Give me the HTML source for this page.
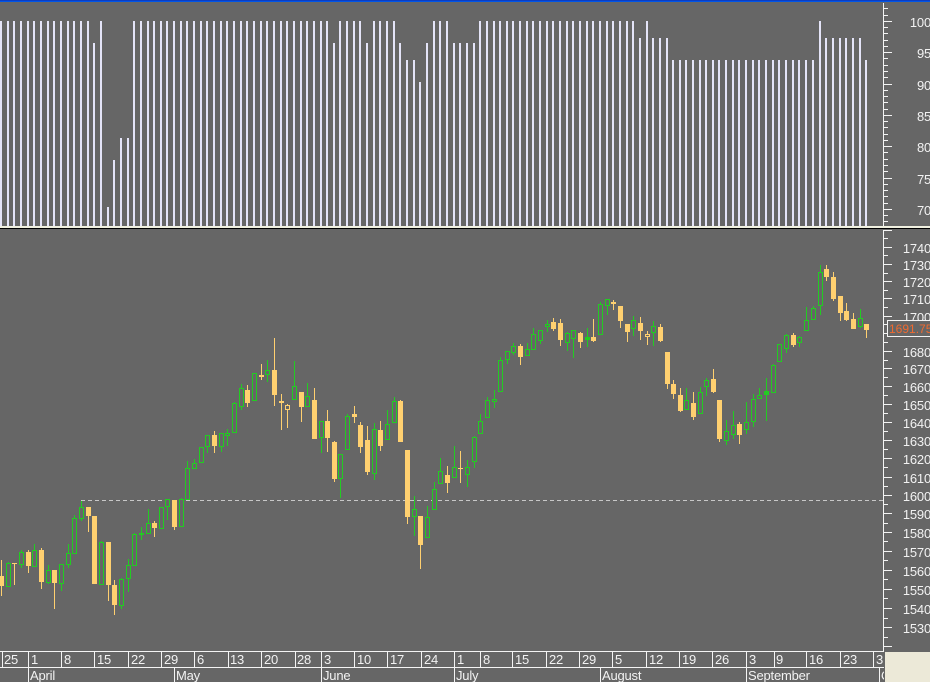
<!DOCTYPE html>
<html><head><meta charset="utf-8"><title>Chart</title>
<style>
html,body{margin:0;padding:0;background:#666;width:930px;height:682px;overflow:hidden}
svg{display:block}
text{font-family:"Liberation Sans",Arial,sans-serif;font-size:13px;letter-spacing:-.2px;fill:#f2f2f2}
</style></head><body>
<svg width="930" height="682" viewBox="0 0 930 682" xmlns="http://www.w3.org/2000/svg" shape-rendering="crispEdges">
<rect width="930" height="682" fill="#666666"/>
<rect width="930" height="1" fill="#0a3cc4"/><rect y="1" width="930" height="1" fill="#0055e5"/>
<!-- upper histogram -->
<path transform="translate(1 0)" fill="none" stroke="#e4e4f8" stroke-width="2" d="M0 21V226M7 21V226M13 21V226M20 21V226M27 21V226M33 21V226M40 21V226M47 21V226M53 21V226M60 21V226M67 21V226M73 21V226M80 21V226M87 21V226M100 21V226M133 21V226M140 21V226M147 21V226M153 21V226M160 21V226M166 21V226M173 21V226M180 21V226M186 21V226M193 21V226M200 21V226M206 21V226M213 21V226M220 21V226M226 21V226M233 21V226M240 21V226M246 21V226M253 21V226M260 21V226M266 21V226M273 21V226M280 21V226M286 21V226M293 21V226M300 21V226M306 21V226M313 21V226M320 21V226M326 21V226M339 21V226M346 21V226M353 21V226M359 21V226M373 21V226M379 21V226M386 21V226M393 21V226M433 21V226M439 21V226M446 21V226M479 21V226M486 21V226M493 21V226M499 21V226M506 21V226M512 21V226M519 21V226M526 21V226M532 21V226M539 21V226M546 21V226M552 21V226M559 21V226M566 21V226M572 21V226M579 21V226M586 21V226M592 21V226M599 21V226M606 21V226M612 21V226M619 21V226M626 21V226M632 21V226M646 21V226M819 21V226M93 43V226M333 43V226M366 43V226M399 43V226M426 43V226M453 43V226M459 43V226M466 43V226M473 43V226M639 38V226M652 38V226M659 38V226M666 38V226M825 38V226M832 38V226M839 38V226M845 38V226M852 38V226M859 38V226M406 60V226M413 60V226M672 60V226M679 60V226M685 60V226M692 60V226M699 60V226M705 60V226M712 60V226M718 60V226M725 60V226M732 60V226M738 60V226M745 60V226M752 60V226M758 60V226M765 60V226M772 60V226M778 60V226M785 60V226M792 60V226M798 60V226M805 60V226M812 60V226M865 60V226M419 82V226M120 138V226M127 138V226M113 160V226M107 207V226"/>
<rect y="226" width="930" height="2" fill="#f0f0e0"/><rect y="228" width="930" height="1" fill="#000"/>
<!-- dashed level -->
<path d="M81 500.5H883" stroke="#c8c8c8" stroke-width="1" stroke-dasharray="4 3" fill="none"/>
<!-- orange wicks -->
<path transform="translate(1.5 0)" fill="none" stroke="#ffd070" stroke-width="1" d="M0 560V596M13 563V585M27 550V573M40 548V589M53 570V609M87 507V532M107 542V601M113 580V615M153 521V537M173 500V530M213 431V453M246 385V407M260 364V380M273 338V406M280 394V430M286 404V428M300 392V422M313 388V439M326 410V452M333 441V482M353 406V423M359 422V453M366 426V475M379 421V451M399 400V442M406 450V524M419 516V569M446 466V493M459 451V483M519 344V365M552 318V331M559 319V346M579 332V348M592 319V342M612 300V310M619 306V328M626 324V342M639 317V340M646 331V345M659 324V342M666 352V389M672 380V399M679 388V412M692 392V420M712 369V393M718 400V442M738 422V444M792 333V347M825 265V281M832 272V301M839 296V321M845 303V321M852 313V329M865 324V338"/>
<!-- orange bodies -->
<path transform="translate(-1 0)" fill="#ffd070" d="M0 576h5V586h-5zM13 563h5V564h-5zM27 552h5V566h-5zM40 550h5V582h-5zM53 570h5V583h-5zM87 507h5V516h-5zM93 516h5V584h-5zM107 542h5V585h-5zM113 585h5V605h-5zM153 523h5V528h-5zM173 500h5V527h-5zM213 435h5V446h-5zM246 390h5V403h-5zM260 375h5V377h-5zM273 370h5V395h-5zM280 401h5V403h-5zM300 392h5V407h-5zM313 400h5V439h-5zM326 421h5V438h-5zM333 442h5V479h-5zM353 414h5V417h-5zM359 425h5V447h-5zM366 440h5V472h-5zM379 430h5V446h-5zM399 401h5V442h-5zM406 450h5V517h-5zM419 516h5V545h-5zM446 475h5V483h-5zM459 468h5V469h-5zM519 346h5V357h-5zM552 322h5V329h-5zM559 323h5V340h-5zM579 333h5V342h-5zM592 337h5V341h-5zM612 302h5V304h-5zM619 306h5V321h-5zM626 324h5V332h-5zM639 323h5V331h-5zM659 327h5V341h-5zM666 352h5V384h-5zM672 384h5V394h-5zM679 395h5V411h-5zM692 403h5V417h-5zM712 379h5V392h-5zM718 400h5V439h-5zM738 424h5V435h-5zM792 335h5V345h-5zM825 269h5V277h-5zM832 277h5V299h-5zM839 296h5V313h-5zM845 311h5V320h-5zM852 319h5V329h-5zM865 324h5V330h-5z"/>
<!-- orange hollow bodies -->
<path transform="translate(-.5 .5)" fill="#666666" stroke="#ffd070" stroke-width="1" d="M286 405h4V409h-4zM646 334h4V336h-4z"/>
<!-- green wicks -->
<path transform="translate(1.5 0)" fill="none" stroke="#22cc22" stroke-width="1" d="M7 562V587M20 550V568M33 544V567M47 565V584M60 564V591M67 544V568M73 515V554M80 501V521M100 541V585M120 578V609M127 559V592M133 533V566M140 527V540M147 509V534M160 507V529M166 499V520M180 498V527M186 461V500M193 459V469M200 447V463M206 435V453M220 433V452M226 429V446M233 402V433M240 384V410M253 373V401M266 360V382M293 361V400M306 383V407M320 421V453M339 454V498M346 414V450M373 423V480M386 410V440M393 397V423M413 496V536M426 506V538M433 482V510M439 458V484M453 446V478M466 460V487M473 436V468M479 414V434M486 397V418M493 390V408M499 357V392M506 351V364M512 343V355M526 343V356M532 328V350M539 330V344M546 320V332M566 332V351M572 330V358M586 328V347M599 302V335M606 299V315M632 316V336M652 321V346M685 388V410M699 387V414M705 378V396M725 420V445M732 411V439M745 402V434M752 394V427M758 388V399M765 378V421M772 364V393M778 344V362M785 334V353M798 336V347M805 307V331M812 306V320M819 265V315M859 309V328"/>
<!-- green hollow bodies -->
<path transform="translate(-.5 .5)" fill="#666666" stroke="#22cc22" stroke-width="1" d="M7 563h4V586h-4zM20 552h4V564h-4zM33 550h4V566h-4zM47 570h4V582h-4zM60 564h4V583h-4zM67 553h4V564h-4zM73 518h4V553h-4zM80 507h4V518h-4zM100 542h4V584h-4zM120 579h4V605h-4zM127 565h4V578h-4zM133 534h4V565h-4zM147 523h4V533h-4zM160 507h4V528h-4zM166 499h4V506h-4zM180 499h4V526h-4zM186 468h4V499h-4zM193 463h4V468h-4zM200 447h4V462h-4zM206 435h4V446h-4zM220 433h4V446h-4zM226 433h4V435h-4zM233 403h4V432h-4zM240 388h4V406h-4zM253 373h4V400h-4zM266 370h4V374h-4zM293 386h4V399h-4zM306 396h4V406h-4zM320 421h4V437h-4zM339 454h4V478h-4zM346 416h4V449h-4zM373 429h4V473h-4zM386 424h4V439h-4zM393 401h4V422h-4zM413 509h4V516h-4zM426 517h4V537h-4zM433 489h4V509h-4zM439 471h4V483h-4zM453 467h4V477h-4zM466 467h4V474h-4zM473 437h4V461h-4zM479 421h4V433h-4zM486 400h4V417h-4zM493 399h4V401h-4zM499 360h4V391h-4zM506 351h4V359h-4zM512 346h4V352h-4zM526 349h4V355h-4zM532 334h4V349h-4zM539 330h4V340h-4zM546 324h4V326h-4zM566 333h4V342h-4zM572 330h4V338h-4zM599 304h4V334h-4zM606 299h4V305h-4zM632 320h4V328h-4zM652 326h4V332h-4zM685 400h4V409h-4zM699 392h4V413h-4zM705 380h4V386h-4zM725 431h4V440h-4zM732 425h4V434h-4zM745 422h4V429h-4zM752 399h4V421h-4zM758 395h4V398h-4zM772 365h4V392h-4zM778 344h4V361h-4zM785 335h4V348h-4zM798 337h4V342h-4zM805 320h4V330h-4zM812 308h4V319h-4zM819 272h4V305h-4zM859 318h4V326h-4z"/>
<!-- green filled bodies -->
<path transform="translate(-1 0)" fill="#22cc22" d="M140 533h5V535h-5zM586 337h5V340h-5zM765 391h5V395h-5z"/>
<!-- axes -->
<g fill="none" stroke="#f4f4f4" stroke-width="1">
<path d="M883.5 3V226M883.5 230V651"/>
<path d="M883 21.5H892M883 52.5H892M883 84.5H892M883 115.5H892M883 146.5H892M883 178.5H892M883 209.5H892M883 8.5H888M883 15.5H888M883 27.5H888M883 33.5H888M883 40.5H888M883 46.5H888M883 58.5H888M883 65.5H888M883 71.5H888M883 77.5H888M883 90.5H888M883 96.5H888M883 102.5H888M883 109.5H888M883 121.5H888M883 127.5H888M883 134.5H888M883 140.5H888M883 152.5H888M883 159.5H888M883 165.5H888M883 171.5H888M883 184.5H888M883 190.5H888M883 196.5H888M883 203.5H888M883 215.5H888M883 221.5H888"/>
<path d="M883 230.5H892M883 247.5H892M883 264.5H892M883 281.5H892M883 298.5H892M883 316.5H892M883 333.5H892M883 351.5H892M883 368.5H892M883 386.5H892M883 404.5H892M883 422.5H892M883 440.5H892M883 458.5H892M883 477.5H892M883 495.5H892M883 513.5H892M883 532.5H892M883 551.5H892M883 570.5H892M883 589.5H892M883 608.5H892M883 627.5H892M883 646.5H892M883 238.5H888M883 255.5H888M883 273.5H888M883 290.5H888M883 307.5H888M883 324.5H888M883 342.5H888M883 360.5H888M883 377.5H888M883 395.5H888M883 413.5H888M883 431.5H888M883 449.5H888M883 467.5H888M883 486.5H888M883 504.5H888M883 523.5H888M883 541.5H888M883 560.5H888M883 579.5H888M883 598.5H888M883 618.5H888M883 637.5H888"/>
<!-- time axis -->
<path d="M0 651.5H884M0 667.5H884"/>
<path d="M2.5 651V667M28.5 651V667M61.5 651V667M94.5 651V667M128.5 651V667M161.5 651V667M194.5 651V667M228.5 651V667M261.5 651V667M295.5 651V667M321.5 651V667M354.5 651V667M387.5 651V667M421.5 651V667M454.5 651V667M480.5 651V667M512.5 651V667M546.5 651V667M579.5 651V667M612.5 651V667M646.5 651V667M679.5 651V667M712.5 651V667M746.5 651V667M774.5 651V667M806.5 651V667M840.5 651V667M873.5 651V667"/>
<path d="M28.5 667V682M174.5 667V682M321.5 667V682M454.5 667V682M600.5 667V682M746.5 667V682M879.5 667V682"/>
</g>
<text x="881" y="680">October</text>
<rect x="884" y="668" width="1" height="14" fill="#666666"/>
<rect x="885" y="652" width="45" height="30" fill="#ece9d8"/>
<!-- labels upper -->
<g text-anchor="end">
<text x="931" y="27">100</text><text x="931" y="58">95</text><text x="931" y="90">90</text><text x="931" y="121">85</text><text x="931" y="152">80</text><text x="931" y="184">75</text><text x="931" y="215">70</text>
<text x="931" y="253">1740</text><text x="931" y="270">1730</text><text x="931" y="287">1720</text><text x="931" y="304">1710</text><text x="931" y="322">1700</text><text x="931" y="357">1680</text><text x="931" y="374">1670</text><text x="931" y="392">1660</text><text x="931" y="410">1650</text><text x="931" y="428">1640</text><text x="931" y="446">1630</text><text x="931" y="464">1620</text><text x="931" y="483">1610</text><text x="931" y="501">1600</text><text x="931" y="519">1590</text><text x="931" y="538">1580</text><text x="931" y="557">1570</text><text x="931" y="576">1560</text><text x="931" y="595">1550</text><text x="931" y="614">1540</text><text x="931" y="633">1530</text>
</g>
<rect x="887.5" y="320.5" width="50" height="16" fill="#666666" stroke="#f4f4f4" stroke-width="1"/>
<text x="889" y="333" style="fill:#f06a30;font-size:12px;letter-spacing:0">1691.750</text>
<!-- dates -->
<g>
<text x="4" y="664">25</text><text x="31" y="664">1</text><text x="64" y="664">8</text><text x="97" y="664">15</text><text x="131" y="664">22</text><text x="164" y="664">29</text><text x="197" y="664">6</text><text x="230" y="664">13</text><text x="264" y="664">20</text><text x="297" y="664">28</text><text x="324" y="664">3</text><text x="357" y="664">10</text><text x="390" y="664">17</text><text x="424" y="664">24</text><text x="457" y="664">1</text><text x="483" y="664">8</text><text x="515" y="664">15</text><text x="549" y="664">22</text><text x="582" y="664">29</text><text x="615" y="664">5</text><text x="649" y="664">12</text><text x="682" y="664">19</text><text x="715" y="664">26</text><text x="749" y="664">3</text><text x="776" y="664">9</text><text x="809" y="664">16</text><text x="843" y="664">23</text><text x="876" y="664">3</text>
<text x="30" y="680">April</text><text x="176" y="680">May</text><text x="323" y="680">June</text><text x="456" y="680">July</text><text x="602" y="680">August</text><text x="748" y="680">September</text>
</g>
</svg>
</body></html>
